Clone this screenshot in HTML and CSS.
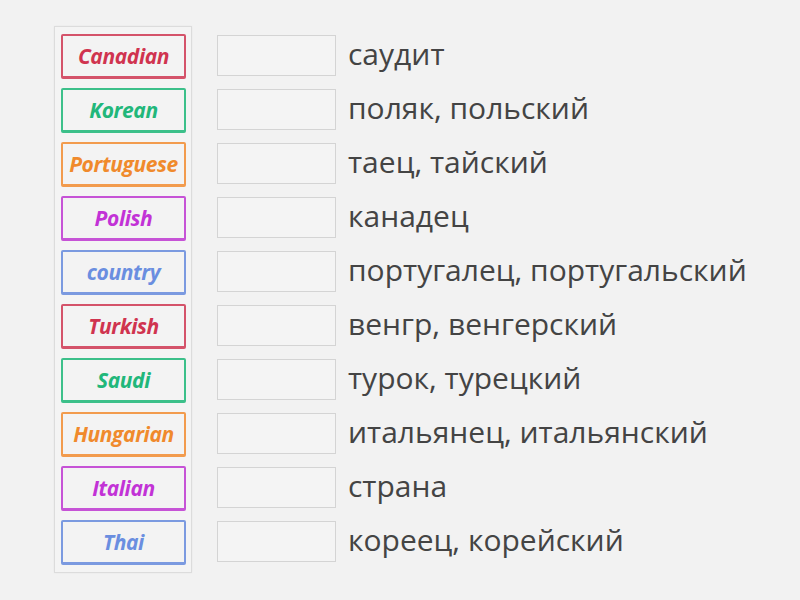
FILE: index.html
```html
<!DOCTYPE html>
<html>
<head>
<meta charset="utf-8">
<link rel="stylesheet" href="styles.css">
</head>
<body>
<div class="stage">
  <div class="panel">
    <div class="card red">Canadian</div>
    <div class="card green">Korean</div>
    <div class="card orange">Portuguese</div>
    <div class="card purple">Polish</div>
    <div class="card blue">country</div>
    <div class="card red">Turkish</div>
    <div class="card green">Saudi</div>
    <div class="card orange">Hungarian</div>
    <div class="card purple">Italian</div>
    <div class="card blue">Thai</div>
  </div>
  <div class="targets">
    <div class="row"><div class="slot"></div><div class="label">саудит</div></div>
    <div class="row"><div class="slot"></div><div class="label">поляк, польский</div></div>
    <div class="row"><div class="slot"></div><div class="label">таец, тайский</div></div>
    <div class="row"><div class="slot"></div><div class="label">канадец</div></div>
    <div class="row"><div class="slot"></div><div class="label">португалец, португальский</div></div>
    <div class="row"><div class="slot"></div><div class="label">венгр, венгерский</div></div>
    <div class="row"><div class="slot"></div><div class="label">турок, турецкий</div></div>
    <div class="row"><div class="slot"></div><div class="label">итальянец, итальянский</div></div>
    <div class="row"><div class="slot"></div><div class="label">страна</div></div>
    <div class="row"><div class="slot"></div><div class="label">кореец, корейский</div></div>
  </div>
</div>
</body>
</html>
```
FILE: styles.css
```css
html, body {
  margin: 0;
  padding: 0;
  background: #f2f2f2;
  width: 800px;
  height: 600px;
  overflow: hidden;
}
.stage {
  display: flex;
  align-items: flex-start;
  padding: 26px 0 0 54px;
}
.panel {
  display: flex;
  flex-direction: column;
  gap: 9px;
  padding: 7px 5px 7px 6px;
  background: #f4f4f4;
  border: 1px solid #dcdcdc;
  box-shadow: 0 0 2px rgba(0,0,0,0.05);
}
.card {
  width: 121px;
  height: 40px;
  border: 2px solid;
  border-bottom-width: 3px;
  border-radius: 2px;
  display: flex;
  align-items: center;
  justify-content: center;
  font-family: "Open Sans", sans-serif;
  font-weight: 700;
  font-style: italic;
  font-size: 21px;
  letter-spacing: -0.4px;
  background: #f3f3f3;
}
.red { color: #d0334f; border-color: #d4536a; }
.green { color: #21b77a; border-color: #3cc08a; }
.orange { color: #f08a2c; border-color: #f29b4d; }
.purple { color: #c232d6; border-color: #c653d6; }
.blue { color: #6a8ee0; border-color: #7b9ae0; }
.targets {
  display: flex;
  flex-direction: column;
  gap: 13px;
  padding-top: 9px;
  margin-left: 25px;
}
.row {
  display: flex;
  align-items: center;
  gap: 12px;
  height: 41px;
}
.slot {
  width: 117px;
  height: 39px;
  border: 1px solid #d4d4d4;
  background: #f4f4f4;
}
.label {
  font-family: "Open Sans", sans-serif;
  font-size: 30px;
  color: #444444;
  white-space: nowrap;
  position: relative;
  top: -2px;
}
```
